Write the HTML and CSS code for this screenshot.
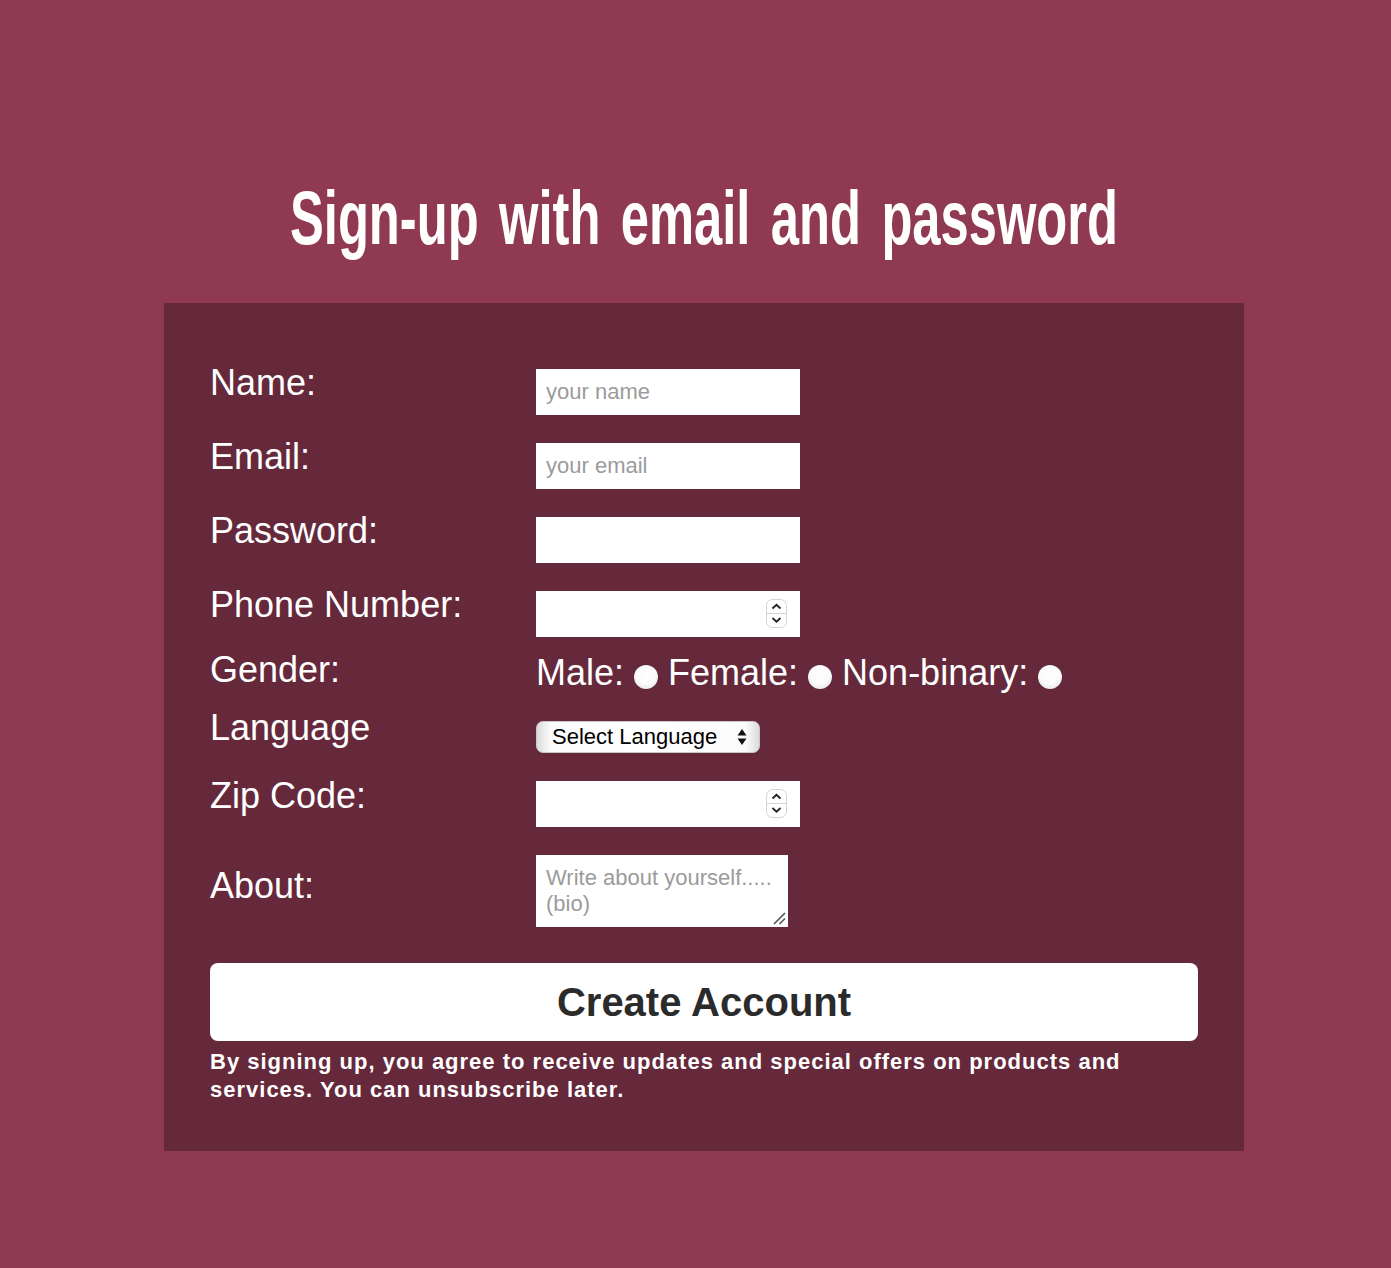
FILE: index.html
```html
<!DOCTYPE html>
<html lang="en">
<head>
<meta charset="utf-8">
<title>Sign-up</title>
<link rel="stylesheet" href="styles.css">
</head>
<body>
<main class="page">
  <h1 class="title">Sign-up with email and password</h1>
  <form class="card">
    <div class="row row-input">
      <label class="label" for="name">Name:</label>
      <input class="field" id="name" type="text" placeholder="your name">
    </div>
    <div class="row row-input">
      <label class="label" for="email">Email:</label>
      <input class="field" id="email" type="email" placeholder="your email">
    </div>
    <div class="row row-input">
      <label class="label" for="pw">Password:</label>
      <input class="field" id="pw" type="password">
    </div>
    <div class="row row-input row-last-input">
      <label class="label" for="phone">Phone Number:</label>
      <span class="num-wrap">
        <input class="field" id="phone" type="number">
        <svg class="spin" width="21" height="29" viewBox="0 0 21 29"><rect x="0.5" y="0.5" width="20" height="28" rx="6" fill="#fff" stroke="#d4d4d4"/><line x1="1" y1="14.5" x2="20" y2="14.5" stroke="#d4d4d4"/><path d="M6.5 9.5 L10.5 5.8 L14.5 9.5" fill="none" stroke="#222" stroke-width="1.8"/><path d="M6.5 19 L10.5 22.7 L14.5 19" fill="none" stroke="#222" stroke-width="1.8"/></svg>
      </span>
    </div>
    <div class="row row-gender">
      <span class="label label-gender">Gender:</span>
      <div class="radios">
        <label class="opt">Male: <input class="radio" type="radio" name="g"></label>
        <label class="opt">Female: <input class="radio" type="radio" name="g"></label>
        <label class="opt">Non-binary: <input class="radio" type="radio" name="g"></label>
      </div>
    </div>
    <div class="row row-lang">
      <label class="label label-lang" for="lang">Language</label>
      <span class="select-wrap">
        <select class="select" id="lang">
          <option>Select Language</option>
          <option>English</option>
          <option>Spanish</option>
        </select>
        <svg class="sel-arrow" width="10" height="20" viewBox="0 0 10 20"><path d="M5 2 L9.5 8.5 L0.5 8.5 Z" fill="#111"/><path d="M5 18 L9.5 11.5 L0.5 11.5 Z" fill="#111"/></svg>
      </span>
    </div>
    <div class="row row-input row-zip">
      <label class="label" for="zip">Zip Code:</label>
      <span class="num-wrap">
        <input class="field" id="zip" type="number">
        <svg class="spin" width="21" height="29" viewBox="0 0 21 29"><rect x="0.5" y="0.5" width="20" height="28" rx="6" fill="#fff" stroke="#d4d4d4"/><line x1="1" y1="14.5" x2="20" y2="14.5" stroke="#d4d4d4"/><path d="M6.5 9.5 L10.5 5.8 L14.5 9.5" fill="none" stroke="#222" stroke-width="1.8"/><path d="M6.5 19 L10.5 22.7 L14.5 19" fill="none" stroke="#222" stroke-width="1.8"/></svg>
      </span>
    </div>
    <div class="row row-about">
      <label class="label label-about" for="about">About:</label>
      <span class="bio-wrap">
        <textarea class="bio" id="about" placeholder="Write about yourself..... (bio)"></textarea>
        <svg class="grip" width="14" height="14" viewBox="0 0 14 14"><path d="M2 13 L13 2 M7.5 13 L13 7.5" stroke="#555" stroke-width="1.6" fill="none"/></svg>
      </span>
    </div>
    <button class="submit" type="button">Create Account</button>
    <p class="note">By signing up, you agree to receive updates and special offers on products and services. You can unsubscribe later.</p>
  </form>
</main>
</body>
</html>
```
FILE: styles.css
```css
* { box-sizing: border-box; }
html, body { margin: 0; padding: 0; }
body {
  background: #8f3a52;
  font-family: "Liberation Sans", Arial, sans-serif;
  color: #fff;
  min-height: 1268px;
}
.page {
  width: 1080px;
  margin-left: 164px;
  padding-top: 178px;
}
.title {
  margin: 0 0 45px;
  height: 80px;
  line-height: 80px;
  text-align: center;
  white-space: nowrap;
  font-family: "Liberation Sans", Arial, sans-serif;
  font-weight: 700;
  font-size: 64px;
  word-spacing: 8px;
  color: #fff;
  transform: scale(0.792, 1.2);
}
.card {
  background: #65293b;
  padding: 66px 46px 47px;
}
.row {
  display: flex;
  align-items: flex-start;
  margin-bottom: 28px;
}
.row-last-input { margin-bottom: 14px; }
.row-gender { margin-bottom: 26px; }
.label {
  width: 326px;
  flex: none;
  font-size: 36px;
  line-height: 41px;
  margin-top: -7px;
  color: #fff;
}
.label-gender { margin-top: -2px; }
.label-lang { margin-top: -14px; }
.row-zip .label { margin-top: -6px; }
.label-about { margin-top: 10px; }
.field {
  width: 264px;
  height: 46px;
  border: none;
  outline: none;
  background: #fff;
  padding: 0 10px;
  font-family: "Liberation Sans", Arial, sans-serif;
  font-size: 22px;
  color: #222;
  -moz-appearance: textfield;
  appearance: textfield;
  display: block;
}
.field::placeholder { color: #9b9b9b; }
.field::-webkit-inner-spin-button,
.field::-webkit-outer-spin-button { -webkit-appearance: none; margin: 0; }
.num-wrap { position: relative; display: block; }
.spin { position: absolute; left: 230px; top: 8px; pointer-events: none; }
.radios {
  display: flex;
  align-items: center;
  height: 44px;
  font-size: 36px;
  line-height: 44px;
}
.opt {
  display: inline-flex;
  align-items: center;
  white-space: pre;
  margin-right: 10px;
}
.radio {
  -webkit-appearance: none;
  appearance: none;
  width: 24px;
  height: 24px;
  margin: 7px 0 0 0;
  border-radius: 50%;
  background: radial-gradient(circle at 50% 42%, #ffffff 0%, #fbfbfb 50%, #e6e6e6 80%, #bdbdbd 100%);
  box-shadow: 0 0 1px rgba(0,0,0,0.5);
  flex: none;
}
.select-wrap { position: relative; display: block; }
.select {
  -webkit-appearance: none;
  appearance: none;
  width: 224px;
  height: 32px;
  border: 1px solid #c8c8c8;
  border-radius: 7px;
  padding: 0 0 2px 15px;
  font-family: "Liberation Sans", Arial, sans-serif;
  font-size: 22px;
  color: #000;
  background: linear-gradient(90deg, #dcdcdc 0%, #fbfbfb 6%, #ffffff 50%, #fbfbfb 94%, #dcdcdc 100%);
  display: block;
  outline: none;
}
.sel-arrow { position: absolute; left: 201px; top: 6px; pointer-events: none; }
.bio-wrap { position: relative; display: block; }
.bio {
  width: 252px;
  height: 72px;
  border: none;
  outline: none;
  background: #fff;
  padding: 10px 10px 0;
  font-family: "Liberation Sans", Arial, sans-serif;
  font-size: 22px;
  line-height: 26px;
  color: #222;
  display: block;
  resize: none;
}
.bio::placeholder { color: #9b9b9b; }
.grip { position: absolute; right: 2px; bottom: 2px; pointer-events: none; }
.submit {
  display: block;
  width: 100%;
  height: 78px;
  margin-top: 36px;
  border: none;
  border-radius: 8px;
  background: #fff;
  font-family: "Liberation Sans", Arial, sans-serif;
  font-weight: 700;
  font-size: 40px;
  color: #2b2b2b;
  cursor: pointer;
}
.note {
  margin: 7px 0 0;
  font-size: 22px;
  line-height: 28px;
  font-weight: 700;
  letter-spacing: 1px;
  color: #fff;
  max-width: 940px;
}
```
